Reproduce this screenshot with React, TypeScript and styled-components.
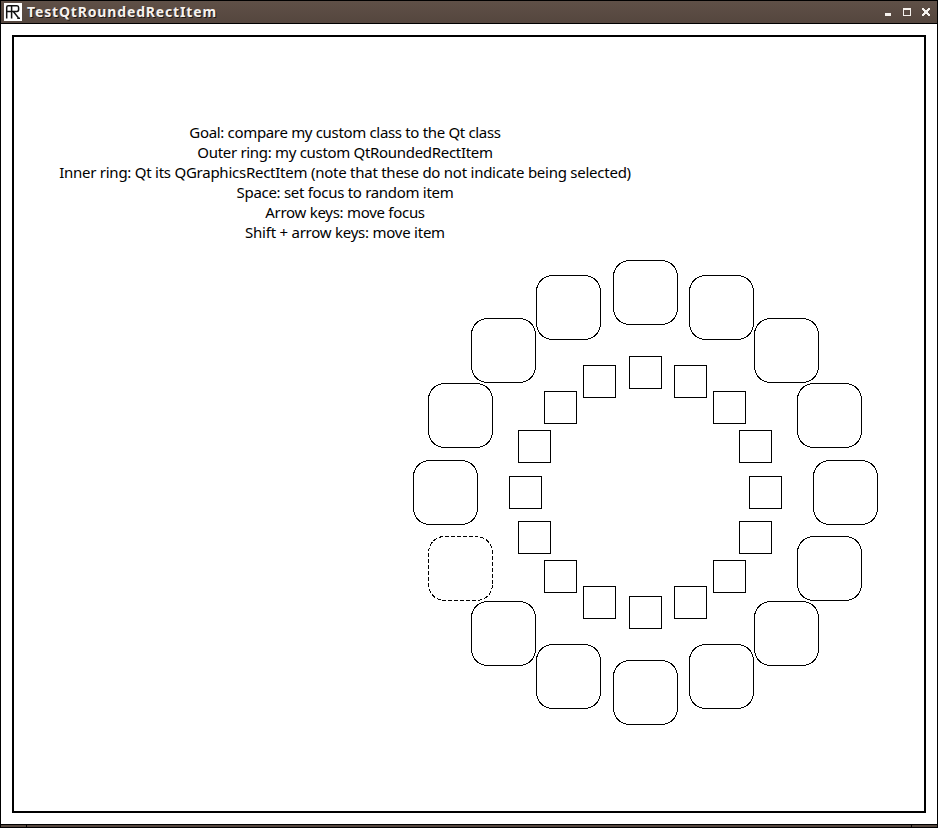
import React from "react";
import styled, { createGlobalStyle } from "styled-components";

const GlobalStyle = createGlobalStyle`
  body { margin: 0; background: #fff; }
  * { box-sizing: border-box; }
`;

const Window = styled.div`
  width: 938px;
  height: 828px;
  display: flex;
  flex-direction: column;
  background: #fff;
  border: 1px solid #000;
  border-bottom: 0;
  overflow: hidden;
`;

const TitleBar = styled.header`
  height: 23px;
  flex: none;
  display: flex;
  align-items: center;
  padding: 0 6px 0 3px;
  background: linear-gradient(#5f5047, #54463e);
  border-bottom: 1px solid #000;
`;

const AppIcon = styled.svg`
  width: 18px;
  height: 18px;
  flex: none;
`;

const Title = styled.h1`
  flex: 1;
  margin: 0 0 0 5px;
  font: 700 14px/22px "Noto Sans", sans-serif;
  letter-spacing: 0.84px;
  color: #f6f2ee;
  text-shadow: 1px 1px 0 #1c1613;
  white-space: nowrap;
`;

const Controls = styled.svg`
  width: 46px;
  height: 8px;
  flex: none;
`;

const View = styled.main`
  flex: 1;
  padding: 11px;
  display: flex;
`;

const Scene = styled.div`
  flex: 1;
  display: grid;
  border: 2px solid #000;

  & > * {
    grid-area: 1 / 1;
  }
`;

const Help = styled.div`
  width: 662px;
  padding-top: 85px;
  display: flex;
  flex-direction: column;
  align-items: center;
`;

const HelpLine = styled.p<{ $spacing: number }>`
  margin: 0;
  font: 400 15px/20px "Noto Sans", sans-serif;
  letter-spacing: ${(p) => p.$spacing}px;
  color: #000;
  white-space: nowrap;
`;

const Rings = styled.svg`
  width: 910px;
  height: 774px;
  fill: none;
  stroke: #000;
  shape-rendering: crispEdges;
`;

const BottomEdge = styled.footer`
  height: 4px;
  flex: none;
  display: grid;
  grid-template-columns: 25px 1fr 25px;
  gap: 1px;
  background: #000;
  border-top: 1px solid #000;
  border-bottom: 1px solid #000;
`;

const Grip = styled.div`
  background: #54463e;
`;

const LINES: [string, number][] = [
  ["Goal: compare my custom class to the Qt class", -0.33],
  ["Outer ring: my custom QtRoundedRectItem", -0.31],
  ["Inner ring: Qt its QGraphicsRectItem (note that these do not indicate being selected)", -0.25],
  ["Space: set focus to random item", -0.3],
  ["Arrow keys: move focus", -0.28],
  ["Shift + arrow keys: move item", -0.24],
];

const COUNT = 16;
const FOCUSED = 11;

const ring = (radius: number, half: number) =>
  Array.from({ length: COUNT }, (_, i) => {
    const a = (i * 2 * Math.PI) / COUNT;
    return {
      x: Math.floor(631 + radius * Math.sin(a) - half + 1e-6) + 0.5,
      y: Math.floor(455 - radius * Math.cos(a) - half + 1e-6) + 0.5,
    };
  });

export default function App() {
  return (
    <>
      <GlobalStyle />
      <Window>
        <TitleBar>
          <AppIcon viewBox="0 0 18 18">
            <rect width="18" height="18" fill="#fff" />
            <path
              d="M2.7 15.5V4.2Q2.7 2.7 4.2 2.7H13Q14.6 2.7 14.6 4.5V6.6Q14.6 8.5 13 8.5H2.7M7.6 2.7V15.5M9.5 8.8L14 14.2V15.2H16"
              fill="none"
              stroke="#111"
              strokeWidth="1.5"
            />
          </AppIcon>
          <Title>TestQtRoundedRectItem</Title>
          <Controls viewBox="0 0 46 8" shapeRendering="crispEdges" fill="#f6f2ee">
            <path d="M0 5h6v3H0z" />
            <path fillRule="evenodd" d="M18 0h8v8h-8zM19 2v5h6V2z" />
            <path d="M37 0h2v1h1v1h2V1h1V0h2v2h-1v1h-1v2h1v1h1v2h-2V7h-1V6h-2v1h-1v1h-2V6h1V5h1V3h-1V2h-1z" />
          </Controls>
        </TitleBar>
        <View>
          <Scene>
            <Help>
              {LINES.map(([text, spacing]) => (
                <HelpLine key={text} $spacing={spacing}>
                  {text}
                </HelpLine>
              ))}
            </Help>
            <Rings viewBox="0 0 910 774">
              {ring(200, 32).map((p, i) => (
                <rect
                  key={i}
                  x={p.x}
                  y={p.y}
                  width="64"
                  height="64"
                  rx="16"
                  strokeDasharray={i === FOCUSED ? "4 2" : undefined}
                />
              ))}
              {ring(120, 16).map((p, i) => (
                <rect key={i} x={p.x} y={p.y} width="32" height="32" />
              ))}
            </Rings>
          </Scene>
        </View>
        <BottomEdge>
          <Grip />
          <Grip />
          <Grip />
        </BottomEdge>
      </Window>
    </>
  );
}
